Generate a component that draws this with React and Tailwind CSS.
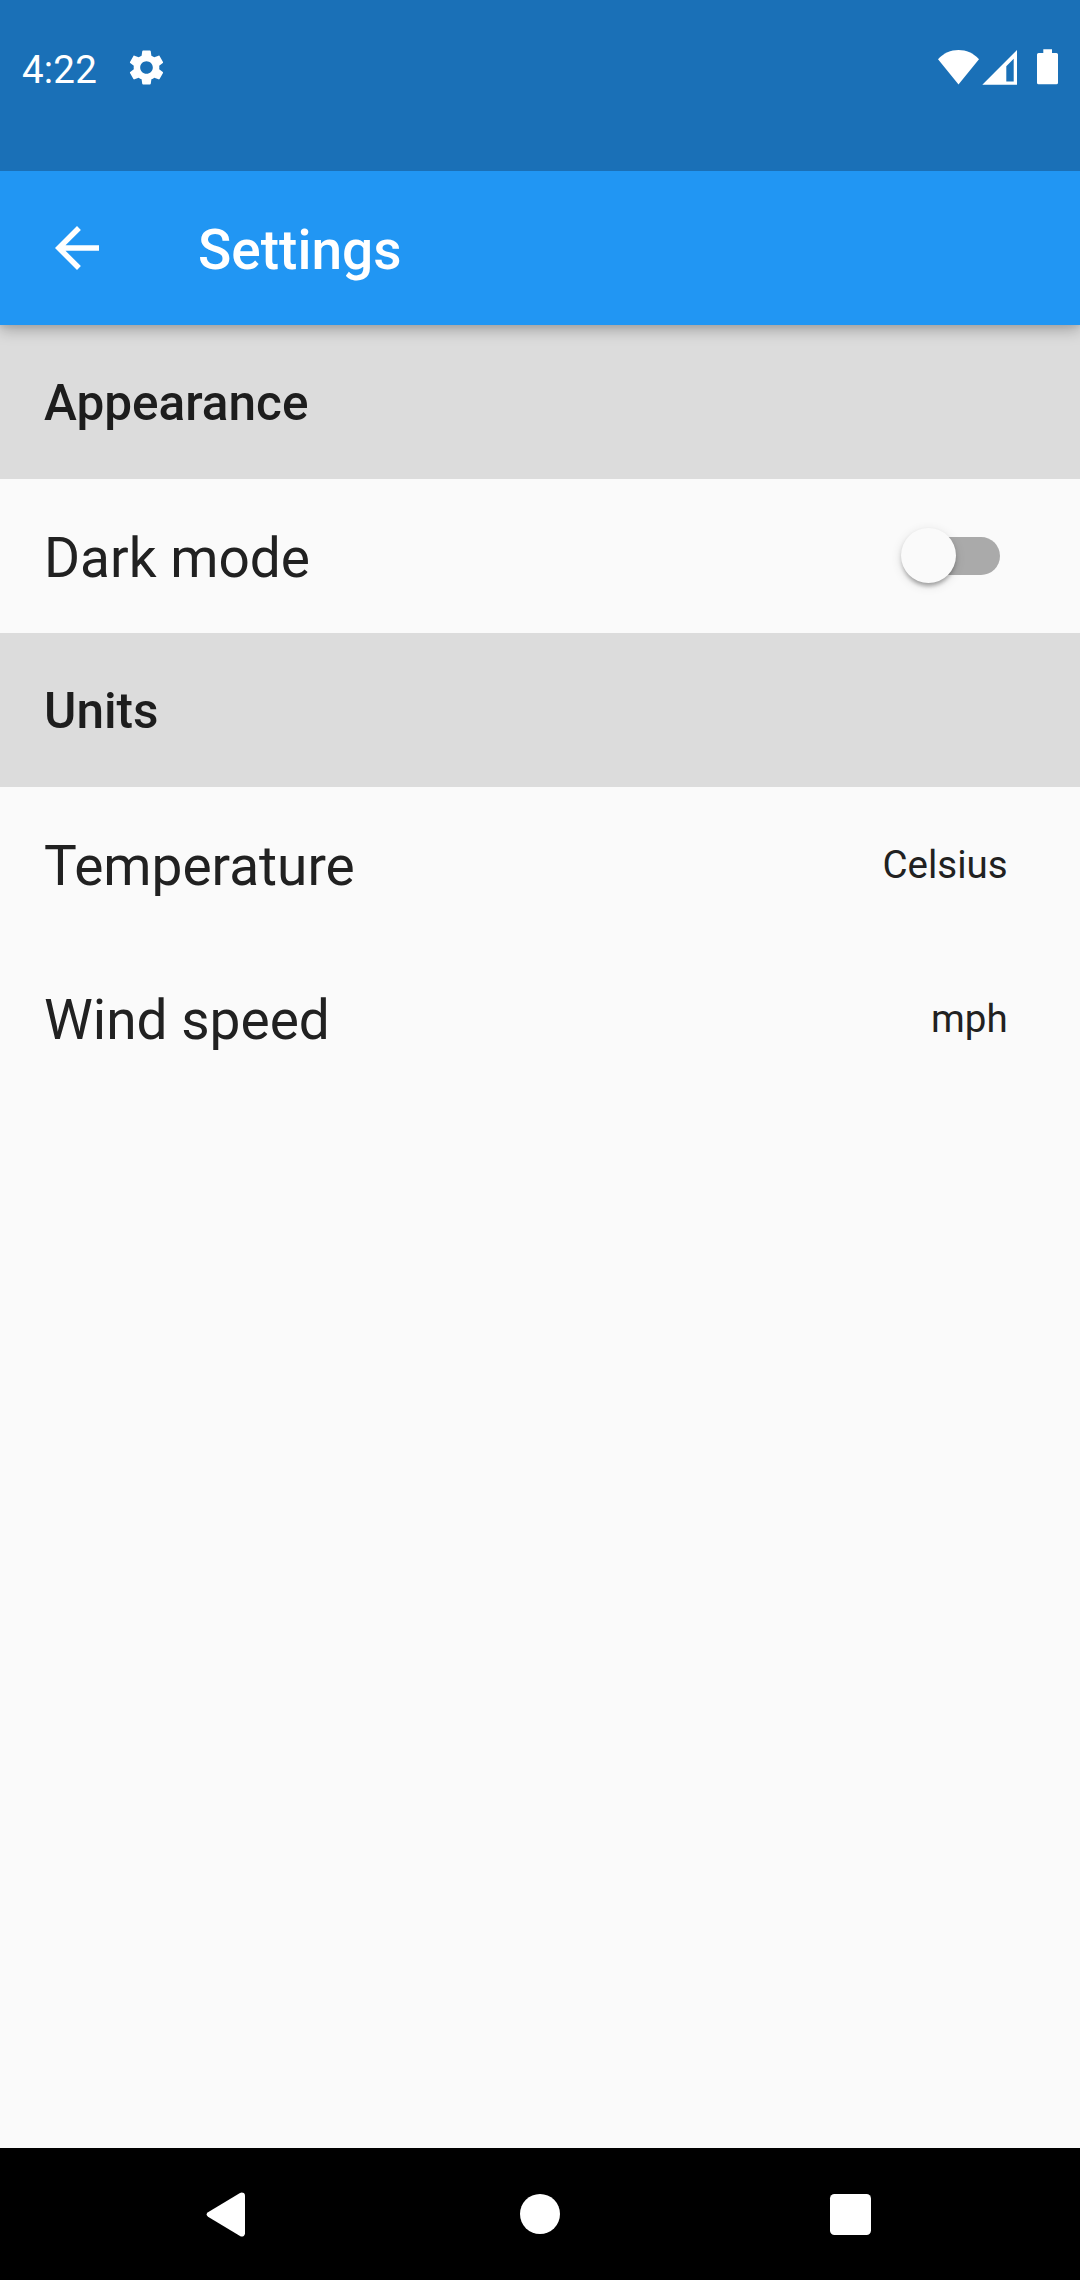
function StatusBar() {
  return (
    <div className="relative z-20 flex h-[171px] shrink-0 items-start justify-between bg-[#1a70b7] pl-[22px] pr-[22px] text-white">
      <div className="flex h-[137px] items-center">
        <span className="pt-[3px] text-[38.5px] leading-none tracking-[0.2px]">4:22</span>
        <svg className="ml-[29px] mt-[-2px] size-[41px]" viewBox="0 0 24 24" fill="currentColor">
          <path d="M19.43 12.98c.04-.32.07-.64.07-.98s-.03-.66-.07-.98l2.11-1.65c.19-.15.24-.42.12-.64l-2-3.46c-.12-.22-.39-.3-.61-.22l-2.49 1c-.52-.4-1.08-.73-1.69-.98l-.38-2.65C14.46 2.18 14.25 2 14 2h-4c-.25 0-.46.18-.49.42l-.38 2.65c-.61.25-1.17.59-1.69.98l-2.49-1c-.23-.09-.49 0-.61.22l-2 3.46c-.13.22-.07.49.12.64l2.11 1.65c-.04.32-.07.65-.07.98s.03.66.07.98l-2.11 1.65c-.19.15-.24.42-.12.64l2 3.46c.12.22.39.3.61.22l2.49-1c.52.4 1.08.73 1.69.98l.38 2.65c.03.24.24.42.49.42h4c.25 0 .46-.18.49-.42l.38-2.65c.61-.25 1.17-.59 1.69-.98l2.49 1c.23.09.49 0 .61-.22l2-3.46c.12-.22.07-.49-.12-.64l-2.11-1.65zM12 15.7c-2.04 0-3.7-1.66-3.7-3.7s1.66-3.7 3.7-3.7 3.7 1.66 3.7 3.7-1.66 3.7-3.7 3.7z" />
        </svg>
      </div>
      <div className="mt-[49px] flex">
        <svg className="h-[36px] w-[42px]" viewBox="0 0 42 36" fill="currentColor">
          <path d="M0 10.3C5.7 4.2 12.7 1.1 20.5 1.1S35.300 4.200 41 10.3L20.500 35.500Z" />
        </svg>
        <svg className="ml-[2px] h-[36px] w-[36px]" viewBox="0 0 36 36" fill="currentColor">
          <path fillRule="evenodd" d="M35 1V35.700H0.300ZM31.700 9.800L24.300 17.200V32.400H31.700Z" />
        </svg>
        <svg className="ml-[19px] h-[36px] w-[21px]" viewBox="0 0 21 36" fill="currentColor">
          <path d="M6.300 0.300H15V4H19.400Q21 4 21 5.600V33.700Q21 35.300 19.400 35.300H1.600Q0 35.300 0 33.700V5.600Q0 4 1.600 4H6.300Z" />
        </svg>
      </div>
    </div>
  );
}

function AppBar() {
  return (
    <header className="relative z-10 flex h-[154px] shrink-0 items-center bg-[#2196f3] pl-[44px] text-white shadow-[0_5px_14px_rgba(0,0,0,0.26),0_2px_5px_rgba(0,0,0,0.06)]">
      <svg className="size-[66px]" viewBox="0 0 24 24" fill="currentColor">
        <path d="M20 11H7.830l5.590-5.590L12 4l-8 8 8 8 1.410-1.410L7.830 13H20v-2z" />
      </svg>
      <h1 className="ml-[88px] pt-[4px] text-[55px] font-medium leading-none">Settings</h1>
    </header>
  );
}

function SectionHeader({ children }) {
  return (
    <h2 className="flex h-[154px] items-center bg-[#dcdcdc] pl-[44px] pt-[4px] text-[49.5px] font-medium leading-none text-[#1d1d1d]">
      {children}
    </h2>
  );
}

function Row({ label, children }) {
  return (
    <div className="flex h-[154px] items-center justify-between pl-[44px] text-[#212121]">
      <span className="pt-[4px] text-[55px] leading-none">{label}</span>
      {children}
    </div>
  );
}

function Switch() {
  return (
    <div className="mr-[80px] flex h-[38px] w-[91px] items-center rounded-full bg-[#aaaaaa]">
      <div className="mb-px ml-[-8px] size-[55px] shrink-0 rounded-full bg-[#fafafa] shadow-[0_5.5px_4.2px_-2.75px_rgba(0,0,0,0.2),0_2.75px_4.2px_rgba(0,0,0,0.14),0_2.75px_10.5px_rgba(0,0,0,0.12)]" />
    </div>
  );
}

function Value({ children }) {
  return <span className="mr-[72.3px] pt-[2px] text-[38.5px] leading-none">{children}</span>;
}

function NavBar() {
  return (
    <nav className="flex h-[132px] shrink-0 items-start bg-black pl-[206px] text-white">
      <svg className="mt-[44px] h-[45px] w-[39px]" viewBox="0 0 39 45" fill="currentColor">
        <path d="M2 20.300L34 0.900Q36 -0.200 37.800 1.100Q39 2 39 3.700V41.300Q39 43 37.800 43.900Q36 45.200 34 44.100L2 24.700Q-0.800 22.500 2 20.300Z" />
      </svg>
      <div className="ml-[275px] mt-[46px] size-[40px] rounded-full bg-white" />
      <div className="ml-[270px] mt-[46px] size-[41.400px] rounded-[4.500px] bg-white" />
    </nav>
  );
}

export default function App() {
  return (
    <div className="flex h-[2280px] w-[1080px] flex-col overflow-hidden bg-[#fafafa] font-['Roboto',sans-serif]">
      <StatusBar />
      <AppBar />
      <main className="flex-1">
        <SectionHeader>Appearance</SectionHeader>
        <Row label="Dark mode">
          <Switch />
        </Row>
        <SectionHeader>Units</SectionHeader>
        <Row label="Temperature">
          <Value>Celsius</Value>
        </Row>
        <Row label="Wind speed">
          <Value>mph</Value>
        </Row>
      </main>
      <NavBar />
    </div>
  );
}
